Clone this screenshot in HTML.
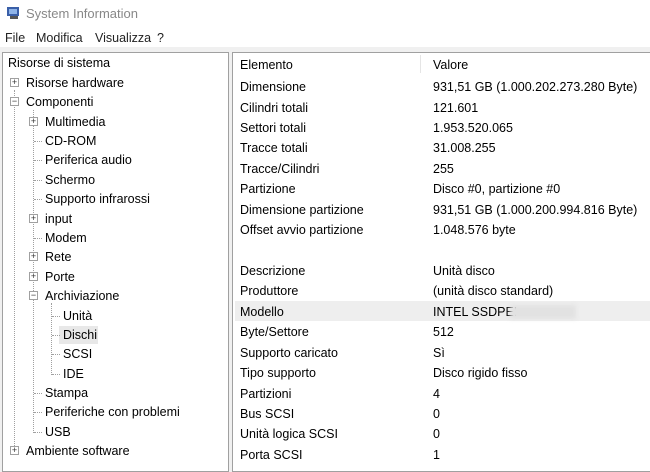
<!DOCTYPE html><html><head><style>
*{margin:0;padding:0;box-sizing:border-box}
body{width:650px;height:466px;overflow:hidden;background:#f0f0f0;font-family:"Liberation Sans",sans-serif;font-size:12.5px;color:#000;position:relative}
.t{position:absolute;white-space:nowrap;line-height:16px}
#title{position:absolute;left:0;top:0;width:650px;height:27px;background:#fff}
#menu{position:absolute;left:0;top:27px;width:650px;height:20px;background:#fff}
#lp{position:absolute;left:2px;top:52px;width:227px;height:420px;background:#fff;border:1px solid #a0a0a0}
#rp{position:absolute;left:232px;top:52px;width:420px;height:420px;background:#fff;border:1px solid #a0a0a0}
.pm{position:absolute;width:9px;height:9px;border:1px solid #a0a0a0;background:#fff;font-size:9px;line-height:7px;text-align:center;color:#333}
.vl{position:absolute;border-left:1px dotted #a0a0a0}
.hl{position:absolute;border-top:1px dotted #a0a0a0;height:0}
</style></head><body>
<div id="title"><svg style="position:absolute;left:6px;top:6px" width="15" height="14"><rect x="1" y="1" width="12" height="9" fill="#3a5fa8"/><rect x="3" y="3" width="8" height="5" fill="#8fb4e8"/><rect x="4" y="10" width="8" height="3" fill="#555"/></svg><div class="t" style="left:26px;top:6px;color:#888;font-size:13px">System Information</div></div>
<div id="menu"><div class="t" style="left:5px;top:3px;color:#222">File</div><div class="t" style="left:36px;top:3px;color:#222">Modifica</div><div class="t" style="left:95px;top:3px;color:#222">Visualizza</div><div class="t" style="left:157px;top:3px;color:#222">?</div></div>
<div id="lp"></div><div id="rp"></div>
<div style="position:absolute;left:59px;top:326px;width:39px;height:18px;background:#e8e8e8"></div>
<div style="position:absolute;left:235px;top:301px;width:415px;height:20px;background:#eeeeee"></div>
<div style="position:absolute;left:420px;top:55px;width:1px;height:18px;background:#e5e5e5"></div>
<div class="vl" style="left:14px;top:90px;height:362px"></div>
<div class="vl" style="left:33px;top:110px;height:323px"></div>
<div class="vl" style="left:51px;top:303px;height:72px"></div>
<div class="pm" style="left:10px;top:78px">+</div>
<div class="pm" style="left:10px;top:97px">−</div>
<div class="pm" style="left:10px;top:446px">+</div>
<div class="pm" style="left:29px;top:117px">+</div>
<div class="pm" style="left:29px;top:214px">+</div>
<div class="pm" style="left:29px;top:252px">+</div>
<div class="pm" style="left:29px;top:272px">+</div>
<div class="pm" style="left:29px;top:291px">−</div>
<div class="hl" style="left:34px;top:141px;width:8px"></div><div class="hl" style="left:34px;top:160px;width:8px"></div><div class="hl" style="left:34px;top:180px;width:8px"></div><div class="hl" style="left:34px;top:199px;width:8px"></div><div class="hl" style="left:34px;top:238px;width:8px"></div><div class="hl" style="left:34px;top:393px;width:8px"></div><div class="hl" style="left:34px;top:412px;width:8px"></div><div class="hl" style="left:34px;top:432px;width:8px"></div>
<div class="hl" style="left:52px;top:316px;width:8px"></div><div class="hl" style="left:52px;top:335px;width:8px"></div><div class="hl" style="left:52px;top:354px;width:8px"></div><div class="hl" style="left:52px;top:374px;width:8px"></div>
<div class="t" style="left:8px;top:55px">Risorse di sistema</div>
<div class="t" style="left:26px;top:75px">Risorse hardware</div>
<div class="t" style="left:26px;top:94px">Componenti</div>
<div class="t" style="left:45px;top:114px">Multimedia</div>
<div class="t" style="left:45px;top:133px">CD-ROM</div>
<div class="t" style="left:45px;top:152px">Periferica audio</div>
<div class="t" style="left:45px;top:172px">Schermo</div>
<div class="t" style="left:45px;top:191px">Supporto infrarossi</div>
<div class="t" style="left:45px;top:211px">input</div>
<div class="t" style="left:45px;top:230px">Modem</div>
<div class="t" style="left:45px;top:249px">Rete</div>
<div class="t" style="left:45px;top:269px">Porte</div>
<div class="t" style="left:45px;top:288px">Archiviazione</div>
<div class="t" style="left:63px;top:308px">Unità</div>
<div class="t" style="left:63px;top:327px">Dischi</div>
<div class="t" style="left:63px;top:346px">SCSI</div>
<div class="t" style="left:63px;top:366px">IDE</div>
<div class="t" style="left:45px;top:385px">Stampa</div>
<div class="t" style="left:45px;top:404px">Periferiche con problemi</div>
<div class="t" style="left:45px;top:424px">USB</div>
<div class="t" style="left:26px;top:443px">Ambiente software</div>
<div class="t" style="left:240px;top:57px">Elemento</div><div class="t" style="left:433px;top:57px">Valore</div>
<div class="t" style="left:240px;top:79px">Dimensione</div><div class="t" style="left:433px;top:79px">931,51 GB (1.000.202.273.280 Byte)</div>
<div class="t" style="left:240px;top:100px">Cilindri totali</div><div class="t" style="left:433px;top:100px">121.601</div>
<div class="t" style="left:240px;top:120px">Settori totali</div><div class="t" style="left:433px;top:120px">1.953.520.065</div>
<div class="t" style="left:240px;top:140px">Tracce totali</div><div class="t" style="left:433px;top:140px">31.008.255</div>
<div class="t" style="left:240px;top:161px">Tracce/Cilindri</div><div class="t" style="left:433px;top:161px">255</div>
<div class="t" style="left:240px;top:181px">Partizione</div><div class="t" style="left:433px;top:181px">Disco #0, partizione #0</div>
<div class="t" style="left:240px;top:202px">Dimensione partizione</div><div class="t" style="left:433px;top:202px">931,51 GB (1.000.200.994.816 Byte)</div>
<div class="t" style="left:240px;top:222px">Offset avvio partizione</div><div class="t" style="left:433px;top:222px">1.048.576 byte</div>
<div class="t" style="left:240px;top:263px">Descrizione</div><div class="t" style="left:433px;top:263px">Unità disco</div>
<div class="t" style="left:240px;top:283px">Produttore</div><div class="t" style="left:433px;top:283px">(unità disco standard)</div>
<div class="t" style="left:240px;top:304px">Modello</div><div class="t" style="left:433px;top:304px">INTEL SSDPEI</div>
<div style="position:absolute;left:510px;top:305px;width:66px;height:14px;background:#e2e2e2;filter:blur(2px)"></div>
<div class="t" style="left:240px;top:324px">Byte/Settore</div><div class="t" style="left:433px;top:324px">512</div>
<div class="t" style="left:240px;top:345px">Supporto caricato</div><div class="t" style="left:433px;top:345px">Sì</div>
<div class="t" style="left:240px;top:365px">Tipo supporto</div><div class="t" style="left:433px;top:365px">Disco rigido fisso</div>
<div class="t" style="left:240px;top:386px">Partizioni</div><div class="t" style="left:433px;top:386px">4</div>
<div class="t" style="left:240px;top:406px">Bus SCSI</div><div class="t" style="left:433px;top:406px">0</div>
<div class="t" style="left:240px;top:426px">Unità logica SCSI</div><div class="t" style="left:433px;top:426px">0</div>
<div class="t" style="left:240px;top:447px">Porta SCSI</div><div class="t" style="left:433px;top:447px">1</div>
</body></html>
